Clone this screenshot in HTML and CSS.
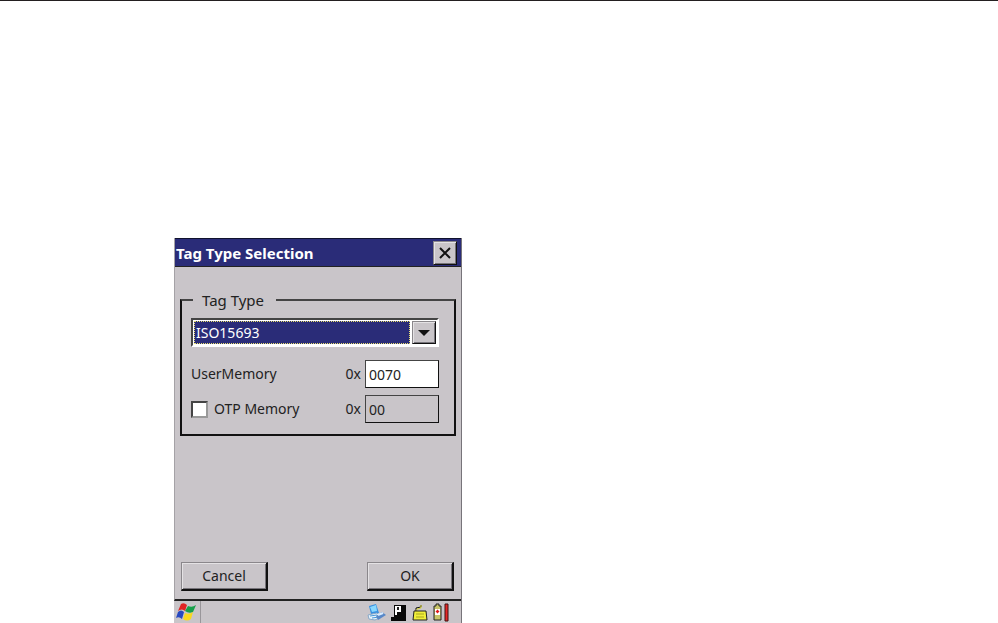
FILE: index.html
```html
<!DOCTYPE html>
<html lang="en">
<head>
    <meta charset="UTF-8">
    <meta name="viewport" content="width=device-width, initial-scale=1.0">
    <title>Tag Type Selection</title>
    <link rel="stylesheet" href="styles.css">
</head>
<body>

<main class="page">
    <div class="device">
        <form class="dialog">
            <div class="titlebar">
                <h1>Tag Type Selection</h1>
                <button type="button" class="close" aria-label="Close">
                    <svg width="12" height="12" viewBox="0 0 12 12"><path d="M1 1l10 10M11 1L1 11" stroke="#111" stroke-width="2" fill="none"/></svg>
                </button>
            </div>

            <div class="content">
                <fieldset>
                    <legend>Tag Type</legend>
                    <div class="combo">
                        <select id="tagType" aria-label="Tag Type">
                            <option>ISO15693</option>
                        </select>
                        <span class="arrow">
                            <svg width="12" height="6" viewBox="0 0 12 6"><path d="M0 0h12L6 6z" fill="#111"/></svg>
                        </span>
                    </div>
                    <div class="row">
                        <label class="name" for="userMemory">UserMemory</label>
                        <span>0x</span>
                        <input type="text" id="userMemory" value="0070">
                    </div>
                    <div class="row">
                        <input type="checkbox" id="useOtp">
                        <label class="name" for="useOtp">OTP Memory</label>
                        <span>0x</span>
                        <input type="text" id="otpMemory" value="00" aria-label="OTP Memory size" disabled>
                    </div>
                </fieldset>

                <div class="buttons">
                    <button type="button" class="btn">Cancel</button>
                    <button type="submit" class="btn">OK</button>
                </div>
            </div>
        </form>

        <div class="taskbar">
            <button type="button" class="start" aria-label="Start">
                <svg width="20" height="18" viewBox="0 0 20 18">
                    <path d="M5 1Q8-1 11 2L9 8Q6 5 2 8z" fill="#e02424"/>
                    <path d="M12 3Q16 5 20 2L17 9Q13 11 9 8z" fill="#18a04a"/>
                    <path d="M2 9Q5 6 8 9L6 16Q3 13 0 15z" fill="#2848c0"/>
                    <path d="M9 10Q13 12 17 9L15 16Q11 19 7 16z" fill="#f8d820"/>
                </svg>
            </button>
            <div class="tray">
                <svg width="19" height="17" viewBox="0 0 19 17">
                    <path d="M2 2l7-2 3 9-8 1z" fill="#3890e0"/>
                    <path d="M3 3l6-2 1 6-5 1z" fill="#88d8ff"/>
                    <path d="M1 11l9-2 4 4-6 3-6-1z" fill="#e8f4fc" stroke="#88a8c8"/>
                    <path d="M3 12l7-1M5 14l7-1" stroke="#4898d8"/>
                    <path d="M9 12l6-4 4 3-8 5z" fill="#5888c8"/>
                    <path d="M11 11l5-2" stroke="#d8ecff" stroke-width="2"/>
                </svg>
                <svg width="16" height="17" viewBox="0 0 16 17">
                    <path d="M3 1h12v16H0v-4h3z" fill="#080808"/>
                    <path d="M4 2h6v6H6v3H4z" fill="#fff"/>
                    <path d="M6 3h2v3H6z" fill="#222"/>
                </svg>
                <svg width="16" height="17" viewBox="0 0 16 17">
                    <path d="M4 8V4l5-1V1" stroke="#111" fill="none"/>
                    <path d="M5 8V5l4-1V1" stroke="#d8d438" fill="none"/>
                    <path d="M2 7h12l1 9H1z" fill="#f0ee38" stroke="#222"/>
                    <path d="M4 10h8M4 13h8" stroke="#a8a520"/>
                </svg>
                <svg width="16" height="19" viewBox="0 0 16 19">
                    <path d="M1 3h2V1h3v2h2v14H1z" fill="#c8c468" stroke="#222"/>
                    <path d="M2 6h5v6H2z" fill="#fff"/>
                    <path d="M4 7h1v1h1v1H5v1H4V9H3V8h1z" fill="#e01818" stroke="#e01818" stroke-width=".5"/>
                    <path d="M12 1h3v17h-3z" fill="#e82828" stroke="#401010"/>
                </svg>
            </div>
        </div>
    </div>
</main>

</body>
</html>
```

FILE: styles.css
```css
* {
    box-sizing: border-box;
}
body {
    margin: 0;
    background: #fff;
    color: #222;
    font-family: "Noto Sans", Tahoma, sans-serif;
    font-size: 14px;
    line-height: 20px;
}
button, input, select {
    margin: 0;
    padding: 0;
    color: inherit;
    font: inherit;
}
svg {
    display: block;
}
.page {
    padding: 237px 16px 0 174px;
    border-top: 1px solid #231f20;
}
.device {
    max-width: 288px;
    background: #c9c5c9;
    border-right: 1px solid #77747a;
}
.dialog {
    border-left: 1px solid #a5a2a6;
    border-bottom: 2px solid #222;
}
.titlebar {
    display: flex;
    align-items: center;
    justify-content: space-between;
    height: 29px;
    padding: 0 4px 0 1px;
    background: #2a2c78;
    border-top: 1px solid #10122e;
    border-bottom: 1px solid #222;
}
h1 {
    margin: 0;
    color: #fff;
    font-size: 15px;
}
.close, .arrow, .btn {
    display: flex;
    align-items: center;
    justify-content: center;
    background: #c9c5c9;
    border: 1px solid;
    border-color: #8a878b #111 #111 #8a878b;
    box-shadow: inset 1px 1px #e4e2e4, inset -1px -1px #77747a;
}
.close {
    width: 24px;
    height: 24px;
}
.content {
    padding: 23px 5px 8px;
}
fieldset {
    margin: 0;
    padding: 8px 15px 11px 9px;
    border: 2px solid #111;
    border-top-color: #444;
}
legend {
    margin-left: 2px;
    padding: 0 12px 0 9px;
    font-size: 15px;
}
.combo {
    display: grid;
    grid-template-columns: 1fr 24px;
    height: 29px;
    margin-bottom: 13px;
    padding: 1px;
    background: #fff;
    border: 2px solid;
    border-color: #444 #fff #fff #444;
}
select {
    grid-area: 1 / 1 / 2 / 3;
    padding-left: 1px;
    margin-right: 26px;
    background: #2a2c78;
    border: 1px dotted #e8e070;
    border-radius: 0;
    color: #fff;
    line-height: 18px;
    appearance: none;
}
.arrow {
    grid-area: 1 / 2;
    pointer-events: none;
}
.row {
    display: flex;
    align-items: center;
    gap: 6px;
    height: 28px;
    margin-top: 7px;
}
.row .name {
    flex: 1;
}
.row span {
    margin-right: -2px;
}
input[type="text"] {
    width: 74px;
    height: 28px;
    padding: 0 3px;
    background: #fff;
    border: 1px solid;
    border-color: #444 #111 #111 #444;
    border-radius: 0;
}
input[type="text"]:disabled {
    background: #c9c5c9;
    color: #222;
}
input[type="checkbox"] {
    width: 17px;
    height: 17px;
    background: #fff;
    border: 2px solid;
    border-color: #444 #999 #999 #444;
    appearance: none;
}
input[type="checkbox"]:checked {
    background: #222;
    box-shadow: inset 0 0 0 3px #fff;
}
.buttons {
    display: flex;
    justify-content: space-between;
    margin-top: 126px;
    padding: 0 2px 0 1px;
}
.btn {
    width: 87px;
    height: 29px;
    border-right-width: 2px;
    border-bottom-width: 2px;
}
.taskbar {
    display: flex;
    justify-content: space-between;
    height: 22px;
}
.start {
    width: 27px;
    padding: 2px;
    background: none;
    border: 0;
    border-right: 1px solid #99969a;
}
.tray {
    display: flex;
    align-items: center;
    gap: 5px;
    padding-right: 12px;
}
```
